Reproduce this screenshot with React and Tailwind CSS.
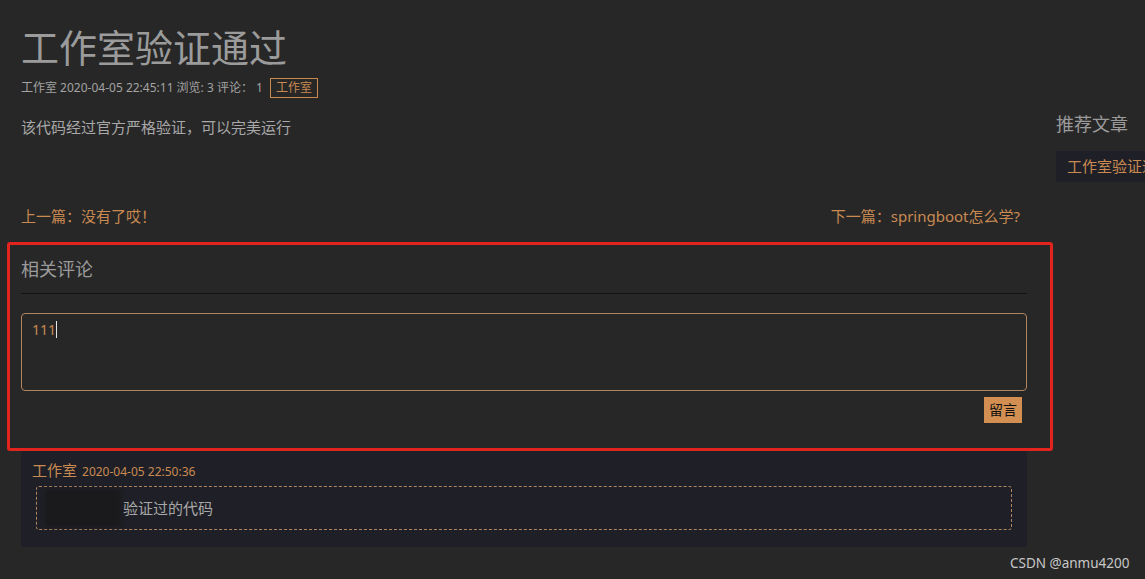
import React from "react";

const FONT = {
  fontFamily: '"Noto Sans", "Noto Sans CJK SC", sans-serif',
};

function ArticleHeader() {
  return (
    <header>
      <h1 className="text-[38px] leading-[40px] text-[#9b9b9b] font-normal pt-[27px]">
        工作室验证通过
      </h1>
      <div className="mt-[11px] flex items-center text-[12px] leading-[20px] text-[#a3a3a3]">
        <span>工作室 2020-04-05 22:45:11 浏览: 3 评论： 1</span>
        <span className="ml-[7px] border border-[#c98a52] text-[#c98a52] px-[5px] h-[20px] leading-[18px]">
          工作室
        </span>
      </div>
      <p className="mt-[18px] text-[15px] leading-[22px] text-[#a8a8a8]">
        该代码经过官方严格验证，可以完美运行
      </p>
    </header>
  );
}

function PrevNext() {
  return (
    <div className="mt-[67px] flex justify-between text-[15px] leading-[22px] text-[#c98a52] pr-[7px]">
      <span>上一篇：没有了哎！</span>
      <span>下一篇：springboot怎么学?</span>
    </div>
  );
}

function CommentForm() {
  return (
    <section className="relative mt-[29px] pb-[28px]">
      <h2 className="text-[18px] leading-[26px] text-[#9b9b9b]">相关评论</h2>
      <div className="mt-[11px] h-px bg-[#111111]" />
      <div className="mt-[19px] h-[78px] rounded-[4px] border border-[#b08561] px-[10px] py-[5px] text-[14px] leading-[22px] text-[#c98a52]">
        111<span className="inline-block w-px h-[17px] bg-[#e6e6e6] align-[-3px]" />
      </div>
      <div className="mt-[6px] flex justify-end pr-[5px]">
        <button className="h-[26px] w-[38px] bg-[#d38f52] text-[14px] text-[#111111] leading-[26px]">
          留言
        </button>
      </div>
      {/* highlight frame drawn over the comment form */}
      <div className="pointer-events-none absolute -top-[14px] -left-[14px] -right-[26px] bottom-0 border-[3px] border-[#e2231e] rounded-[3px]" />
    </section>
  );
}

function CommentCard() {
  return (
    <div className="bg-[#1f2027] rounded-b-[4px] px-[11px] pt-[8px] pb-[17px]">
      <div className="flex items-baseline text-[#c98a52]">
        <span className="text-[15px] leading-[22px]">工作室</span>
        <span className="ml-[5px] text-[12px]">2020-04-05 22:50:36</span>
      </div>
      <div className="mt-[5px] mx-[4px] h-[44px] rounded-[3px] border border-dashed border-[#b08561] flex items-center">
        <div className="ml-[8px] h-[38px] w-[76px] bg-[#1a1a1c] blur-[2px]" />
        <span className="ml-[2px] text-[15px] text-[#a8a8a8]">验证过的代码</span>
      </div>
    </div>
  );
}

function Sidebar() {
  return (
    <aside className="ml-[29px] w-[200px] shrink-0 pt-[110px]">
      <h3 className="text-[18px] leading-[28px] text-[#9b9b9b]">推荐文章</h3>
      <div className="mt-[13px] h-[31px] bg-[#1f2027] pl-[11px] text-[15px] leading-[31px] text-[#c98a52] whitespace-nowrap">
        工作室验证通过
      </div>
    </aside>
  );
}

export default function App() {
  return (
    <div
      className="relative w-[1145px] h-[579px] overflow-hidden bg-[#272727]"
      style={FONT}
    >
      <div className="flex pl-[21px]">
        <main className="w-[1006px] shrink-0">
          <ArticleHeader />
          <PrevNext />
          <CommentForm />
          <CommentCard />
        </main>
        <Sidebar />
      </div>
      <div className="absolute left-[1010px] top-[554px] text-[13.5px] leading-[18px] text-[#c8c8c8]">
        CSDN @anmu4200
      </div>
    </div>
  );
}
